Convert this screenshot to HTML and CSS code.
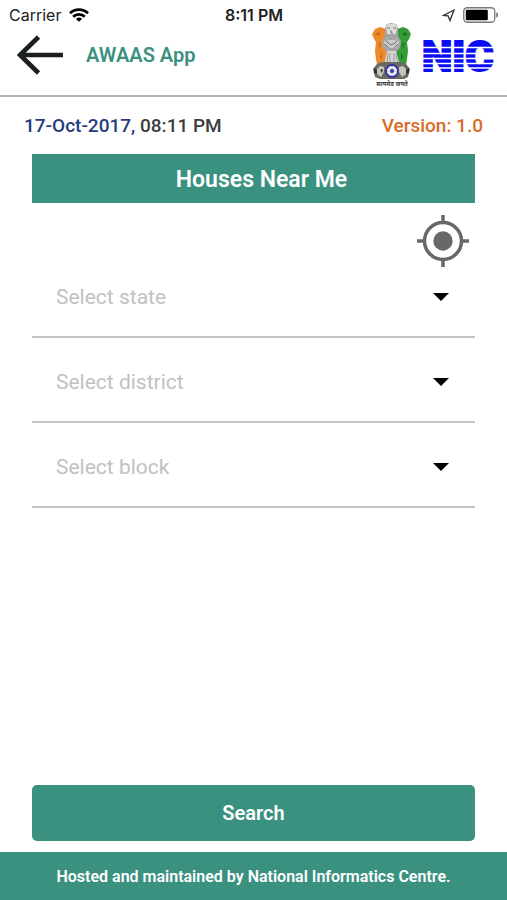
FILE: index.html
```
<!DOCTYPE html>
<html lang="en">
<head>
    <meta charset="UTF-8">
    <meta name="viewport" content="width=device-width, initial-scale=1.0">
    <title>AWAAS App</title>
    <link rel="stylesheet" href="styles.css">
</head>
<body>
    <div class="status-bar">
        <div class="status-left">
            <span>Carrier</span>
            <svg width="20" height="14" viewBox="0 0 20 14" fill="none" stroke="#000" stroke-width="2.8">
                <path d="M1 5.3a12.8 12.8 0 0 1 18 0"/>
                <path d="M4.2 8.8a8.2 8.2 0 0 1 11.6 0"/>
                <path d="M10 13.8 6.9 10.9a4.4 4.4 0 0 1 6.2 0z" fill="#000" stroke="none"/>
            </svg>
        </div>
        <span class="status-time">8:11 PM</span>
        <div class="status-right">
            <svg width="13" height="13" viewBox="0 0 13 13" fill="none" stroke="#333" stroke-width="1.4">
                <path d="M12 1 1.500 6.500l4.500.3 2 4.700z"/>
            </svg>
            <svg width="36" height="16" viewBox="0 0 36 16">
                <rect x=".75" y=".75" width="31" height="14.5" rx="3.5" fill="#fff" stroke="#777" stroke-width="1.3"/>
                <rect x="2.8" y="2.8" width="22" height="10.4" rx="1" fill="#000"/>
                <path d="M33.2 5.3c2.6.8 2.6 4.6 0 5.4z" fill="#777"/>
            </svg>
        </div>
    </div>

    <header class="header">
        <button class="back-button" type="button" aria-label="Back">
            <svg width="46" height="40" viewBox="0 0 46 40" fill="none" stroke="#1c1f1f" stroke-width="4.6">
                <path d="M46 20H3M21.500 2 3 20l18.500 18"/>
            </svg>
        </button>
        <h1>AWAAS App</h1>
        <svg class="emblem" width="40" height="66" viewBox="0 0 40 66">
            <path d="M14 7 8 5 3 7 0 12l2 5 2 3-1 9 1 8 1 6h9l3-12-3-12z" fill="#ef8a2c"/>
            <path d="m25 7 6-2 5 2 3 5-2 5-2 3 1 9-1 8-1 6h-9l-3-12 3-12z" fill="#349c34"/>
            <path d="m3 12 3-2 3 2-3 2zM6 20l3 2-1 5zM8 35l2-5v8z" fill="#c86c20"/>
            <path d="m36 12-3-2-3 2 3 2zM33 20l-3 2 1 5zM31 35l-2-5v8z" fill="#1d7627"/>
            <path d="m13 6 2-4 4-1 5 1 2 4v8l3 5-1 7-4 4h-9l-4-4-1-7 3-5z" fill="#a5a5a5"/>
            <path d="m14 5 2-3h7l2 3-1 6-3 3h-3l-3-3z" fill="#dcdcdc"/>
            <path d="m13 16 3 2h7l3-2 1 5-3 5h-8l-4-5z" fill="#c9c9c9"/>
            <path d="M15 6h3m3 0h3m-5 2v3h2m-4 2h5M13 17l3 4 3 2 4-2 3-4M13 22l4 4m9-4-4 4" fill="none" stroke="#777"/>
            <path d="m15 29h9l4 14H12z" fill="#d7d7d7"/>
            <path d="m16 31-1 11m3-11v11m4-11v11m2-10 2 10" stroke="#999"/>
            <path d="m5 42 5-2h19l5 2 4 5-2 8-4 2H8l-5-2-2-8z" fill="#6b6965"/>
            <path d="m5 47 3-3 4 1v5l-3 5-4-3zm29 0-3-3-4 1v5l3 5 4-3z" fill="#c8c6ba"/>
            <path d="m2 46 3 2v4l-3-1zm35 0-3 2v4l3-1zM8 48l3-1-1 4z" fill="#303030"/>
            <circle cx="20" cy="49" r="6" fill="#fff" stroke="#34349c" stroke-width="1.800"/>
            <path d="M20 44v10m-5-5h10m-8.500-3.500 7 7m0-7-7 7" stroke="#8888cc" stroke-width=".7"/>
            <circle cx="20" cy="49" r="1.900" fill="#30399e"/>
            <text class="motto" x="20" y="64" text-anchor="middle">सत्यमेव जयते</text>
        </svg>
        <svg class="nic-logo" width="76" height="56" viewBox="0 -9 76 56">
            <text x="0" y="35">NIC</text>
            <path d="M0 11.500h76M0 17.500h76M0 22.500h76M0 27.500h76M0 32h76" stroke="#fff" stroke-width="1.300"/>
        </svg>
    </header>

    <main class="content">
        <div class="info-row">
            <span class="time"><span class="date">17-Oct-2017,</span> 08:11 PM</span>
            <span class="version">Version: 1.0</span>
        </div>

        <form class="search-form">
            <h2>Houses Near Me</h2>
            <button class="locate-button" type="button" aria-label="Use my location">
                <svg width="54" height="54" viewBox="0 0 54 54" fill="none" stroke="#686868" stroke-width="3.500">
                    <circle cx="27" cy="27" r="18.500"/>
                    <circle cx="27" cy="27" r="9.700" fill="#686868" stroke="none"/>
                    <path d="M27 1v8M27 45v8M1 27h8M45 27h8"/>
                </svg>
            </button>
            <select class="field" aria-label="State">
                <option>Select state</option>
            </select>
            <select class="field" aria-label="District">
                <option>Select district</option>
            </select>
            <select class="field" aria-label="Block">
                <option>Select block</option>
            </select>
            <button class="search-button" type="submit">Search</button>
        </form>
    </main>

    <footer class="footer">Hosted and maintained by National Informatics Centre.</footer>
</body>
</html>
```

FILE: styles.css
```
* {
    box-sizing: border-box;
}
body {
    font-family: Roboto, sans-serif;
    background-color: #fff;
    margin: 0;
    display: flex;
    flex-direction: column;
    min-height: 100vh;
}
h1, h2 {
    margin: 0;
}
button {
    border: none;
    padding: 0;
    font-family: inherit;
    cursor: pointer;
}
svg {
    display: block;
}

/* status bar */
.status-bar {
    display: grid;
    grid-template-columns: 1fr auto 1fr;
    align-items: center;
    height: 30px;
    padding: 0 8px 0 9px;
    font-family: Inter, sans-serif;
    font-size: 16px;
    color: #222;
}
.status-left, .status-right {
    display: flex;
    align-items: center;
    gap: 8px;
}
.status-right {
    justify-content: flex-end;
}
.status-time {
    font-weight: 600;
}

/* header */
.header {
    display: flex;
    align-items: center;
    height: 67px;
    padding: 0 9px 16px 17px;
    border-bottom: 2px solid #b4b4b4;
}
.back-button {
    background: none;
    margin-right: 23px;
}
.header h1 {
    flex: 1;
    font-size: 20px;
    font-weight: 600;
    color: #3a917f;
}
.emblem {
    margin-right: 10px;
}
.motto {
    font-family: "Noto Sans", sans-serif;
    font-size: 6px;
    font-weight: bold;
    fill: #333;
}
.nic-logo text {
    font-family: Roboto, sans-serif;
    font-size: 43px;
    font-weight: 900;
    fill: #0b0bf5;
    stroke: #0b0bf5;
    stroke-width: 2px;
}

/* content */
.content {
    flex: 1;
    display: flex;
    flex-direction: column;
    padding: 0 32px 11px;
}
.info-row {
    display: flex;
    justify-content: space-between;
    align-items: center;
    height: 57px;
    margin: 0 -8px;
    font-size: 19px;
    font-weight: 500;
}
.time {
    color: #3c3c3c;
}
.date {
    color: #263c7c;
}
.version {
    color: #d96c27;
}
.search-form {
    flex: 1;
    display: flex;
    flex-direction: column;
}
.search-form h2 {
    padding: 2px 0 0 16px;
    background-color: #3a917f;
    color: #fff;
    font-size: 23px;
    font-weight: 600;
    line-height: 47px;
    text-align: center;
}
.locate-button {
    align-self: flex-end;
    background: none;
    margin: 11px 5px 0 0;
}
.field {
    appearance: none;
    width: 100%;
    height: 70px;
    margin: 0 0 15px;
    padding: 0 44px 10px 24px;
    border: none;
    border-bottom: 2px solid #c4c4c4;
    border-radius: 0;
    background: url("data:image/svg+xml,%3Csvg xmlns='http://www.w3.org/2000/svg' width='16' height='8'%3E%3Cpath d='M0 0h16L8 8z'/%3E%3C/svg%3E") no-repeat right 26px top 25px;
    font-family: inherit;
    font-size: 21px;
    color: #c1c1c4;
}
.search-button {
    height: 56px;
    margin-top: auto;
    border-radius: 5px;
    background-color: #3a917f;
    color: #fff;
    font-size: 20px;
    font-weight: 600;
}

.footer {
    padding-top: 2px;
    background-color: #3a917f;
    color: #fff;
    font-size: 16px;
    font-weight: 600;
    line-height: 46px;
    text-align: center;
}
```
